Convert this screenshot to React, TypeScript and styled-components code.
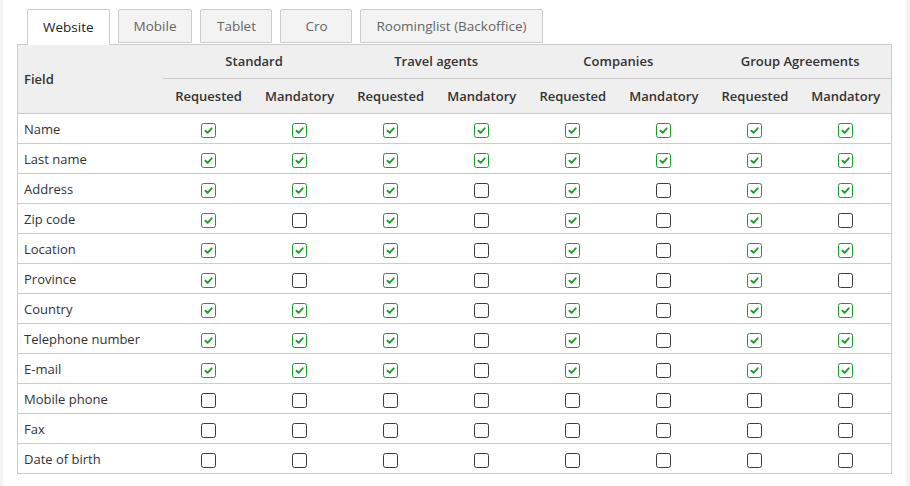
import React from 'react';
import styled, { createGlobalStyle } from 'styled-components';

const GlobalStyle = createGlobalStyle`
  html, body {
    margin: 0;
    padding: 0;
    background: #f3f3f3;
    font-family: 'Open Sans', 'Liberation Sans', sans-serif;
    color: #333;
  }
`;

const tabs = ['Website', 'Mobile', 'Tablet', 'Cro', 'Roominglist (Backoffice)'];
const groups = ['Standard', 'Travel agents', 'Companies', 'Group Agreements'];

// 8 flags per row: Requested/Mandatory for each group
const rows: [string, string][] = [
  ['Name', '11111111'],
  ['Last name', '11111111'],
  ['Address', '11101011'],
  ['Zip code', '10101010'],
  ['Location', '11101011'],
  ['Province', '10101010'],
  ['Country', '11101011'],
  ['Telephone number', '11101011'],
  ['E-mail', '11101011'],
  ['Mobile phone', '00000000'],
  ['Fax', '00000000'],
  ['Date of birth', '00000000'],
];

const Panel = styled.div`
  margin-left: 3px;
  width: 903px;
  min-height: 486px;
  background: #fff;
  padding: 9px 0 0 14px;
  box-sizing: border-box;
`;

const TabBar = styled.div`
  display: flex;
  gap: 8px;
  padding-left: 10px;
  height: 35px;
  position: relative;
  z-index: 1;
`;

const Tab = styled.div<{ $active?: boolean }>`
  display: flex;
  align-items: center;
  justify-content: center;
  padding: 0 15px ${p => (p.$active ? '2px' : '0')};
  min-width: 72px;
  box-sizing: border-box;
  height: ${p => (p.$active ? '36px' : '34px')};
  font-size: 13.5px;
  color: ${p => (p.$active ? '#222' : '#666')};
  background: ${p => (p.$active ? '#fff' : '#f3f3f3')};
  border: 1px solid #ccc;
  border-bottom: ${p => (p.$active ? 'none' : '1px solid #ccc')};
  border-radius: 2px 2px 0 0;
`;

const Table = styled.table`
  width: 875px;
  border-collapse: collapse;
  border: 1px solid #ccc;
  table-layout: fixed;
`;

const HeadCell = styled.th<{ $sub?: boolean }>`
  background: #efefef;
  font-size: 13px;
  font-weight: 600;
  color: #333;
  height: ${p => (p.$sub ? '34px' : '31px')};
  padding: ${p => (p.$sub ? '0' : '0 0 2px')};
  text-align: center;
  border-bottom: 1px solid #ccc;
`;

const FieldHead = styled(HeadCell)`
  text-align: left;
  padding: 0 0 0 6px;
  width: 139px;
`;

const Row = styled.tr`
  border-bottom: 1px solid #ccc;
  &:last-child {
    border-bottom: none;
  }
`;

const LabelCell = styled.td`
  height: 29px;
  padding: 0 0 0 6px;
  font-size: 13px;
  color: #333;
`;

const BoxCell = styled.td`
  text-align: center;
  padding: 0;
  height: 29px;
`;

const Box = styled.span<{ $on: boolean }>`
  display: inline-flex;
  align-items: center;
  justify-content: center;
  width: 15px;
  height: 15px;
  box-sizing: border-box;
  border: 1.6px solid ${p => (p.$on ? '#1f9b2e' : '#3a3a3a')};
  border-radius: 2.5px;
  vertical-align: middle;
`;

const Check = () => (
  <svg width="11" height="11" viewBox="0 0 10 10">
    <path d="M2.2 5.2 L4.2 7.1 L7.9 3" fill="none" stroke="#1f9b2e" strokeWidth="1.7" strokeLinecap="round" strokeLinejoin="round" />
  </svg>
);

export default function App() {
  return (
    <>
      <GlobalStyle />
      <Panel>
        <TabBar>
          {tabs.map((t, i) => (
            <Tab key={t} $active={i === 0}>{t}</Tab>
          ))}
        </TabBar>
        <Table>
          <thead>
            <tr>
              <FieldHead rowSpan={2}>Field</FieldHead>
              {groups.map(g => (
                <HeadCell key={g} colSpan={2}>{g}</HeadCell>
              ))}
            </tr>
            <tr>
              {groups.map(g => (
                <React.Fragment key={g}>
                  <HeadCell $sub>Requested</HeadCell>
                  <HeadCell $sub>Mandatory</HeadCell>
                </React.Fragment>
              ))}
            </tr>
          </thead>
          <tbody>
            {rows.map(([label, flags]) => (
              <Row key={label}>
                <LabelCell>{label}</LabelCell>
                {flags.split('').map((f, i) => (
                  <BoxCell key={i}>
                    <Box $on={f === '1'}>{f === '1' && <Check />}</Box>
                  </BoxCell>
                ))}
              </Row>
            ))}
          </tbody>
        </Table>
      </Panel>
    </>
  );
}
